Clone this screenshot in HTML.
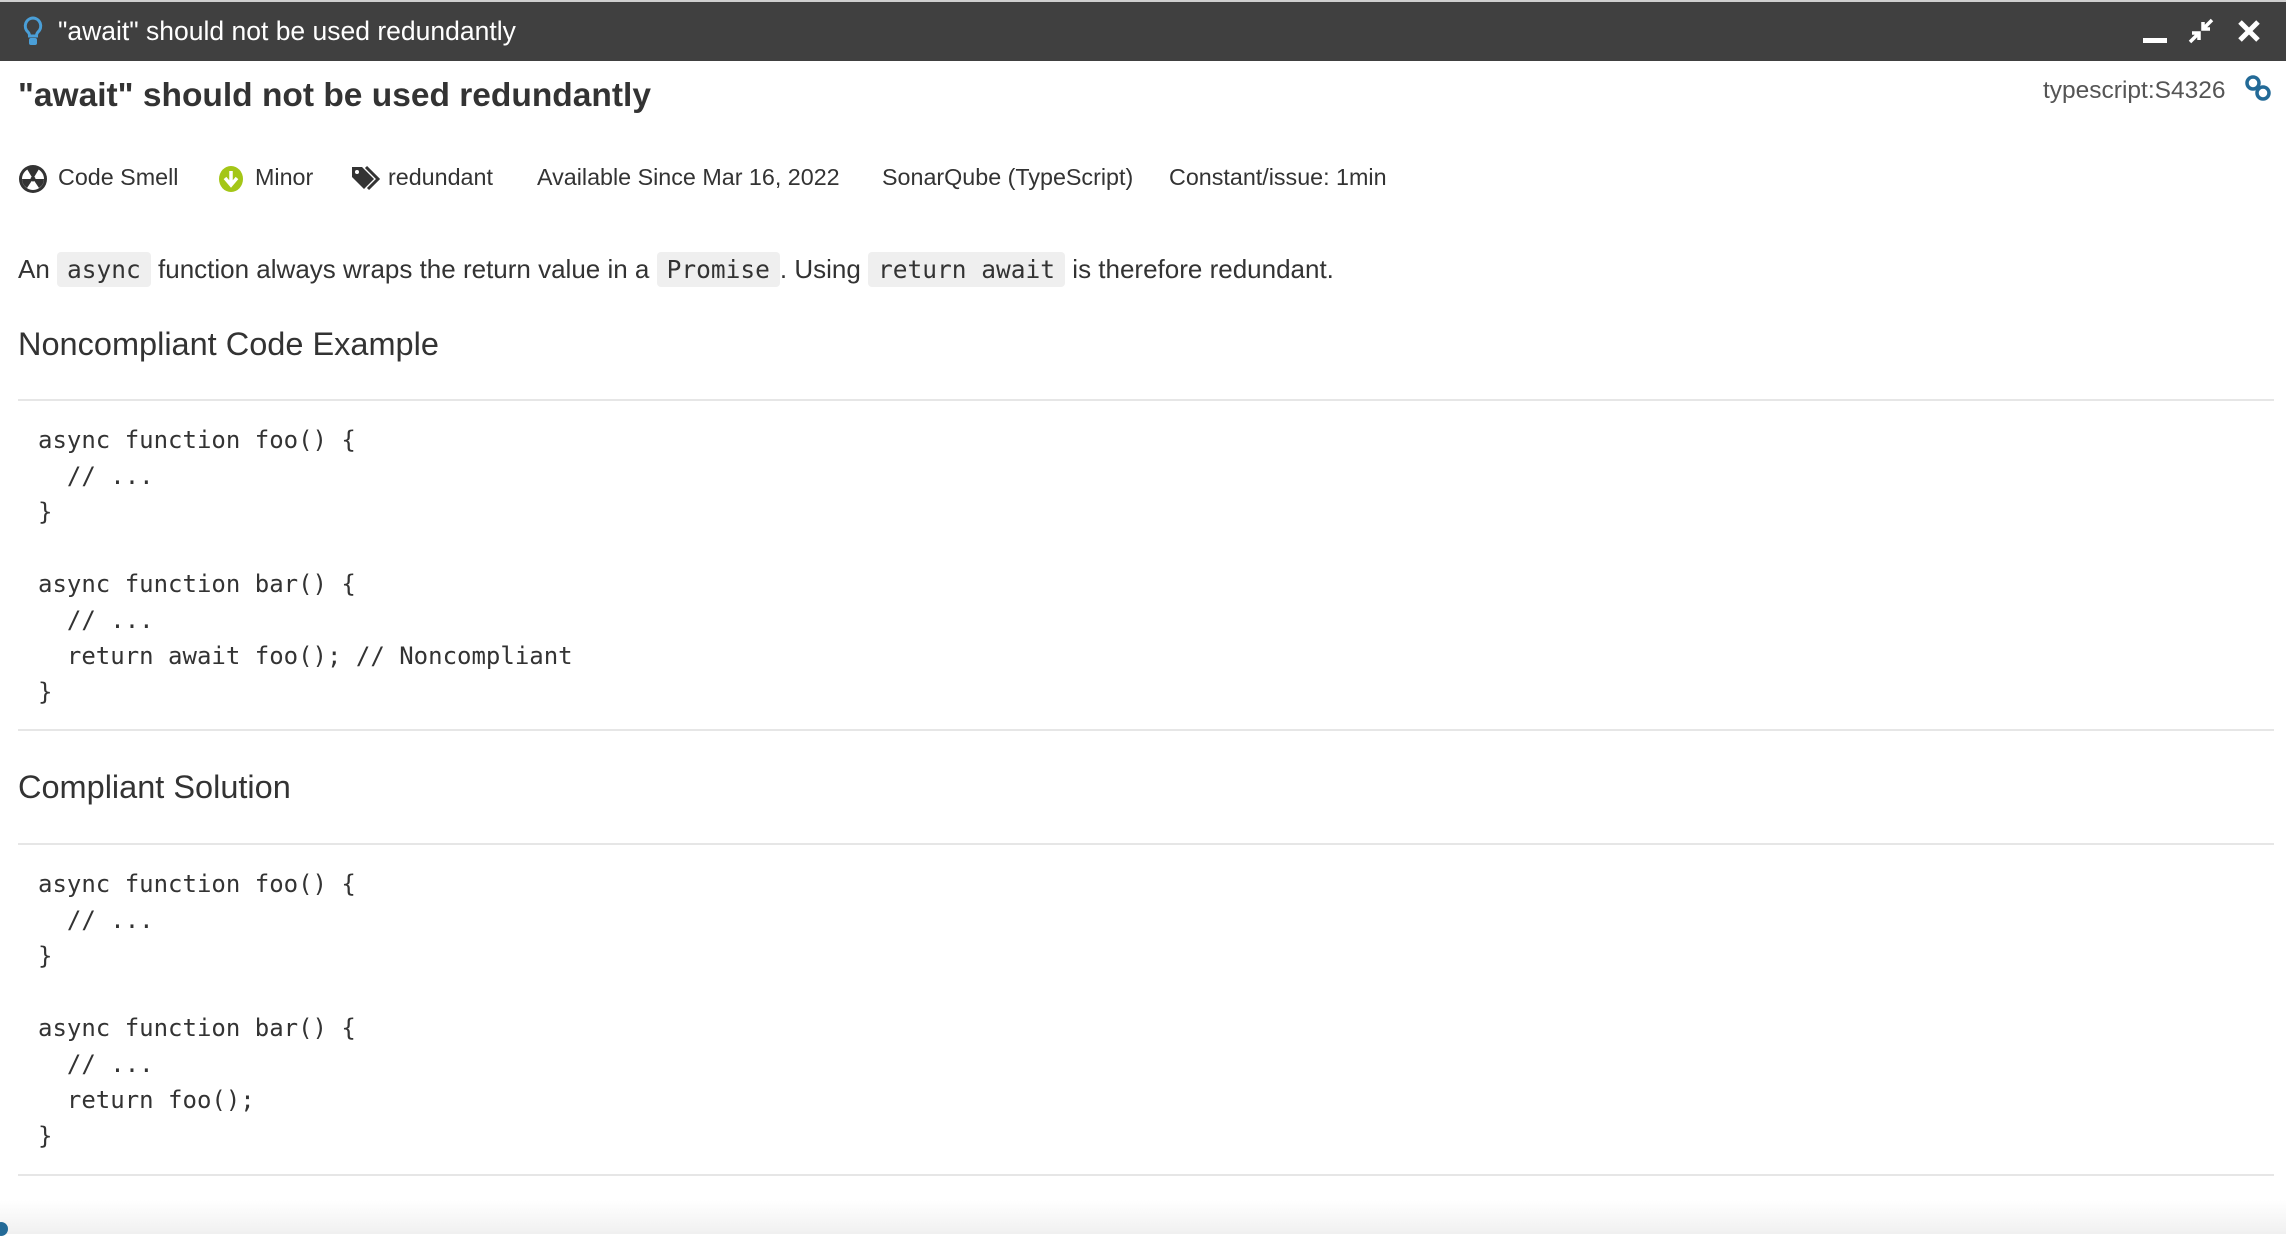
<!DOCTYPE html>
<html><head><meta charset="utf-8"><style>
*{margin:0;padding:0;box-sizing:border-box}
body{width:2286px;height:1234px;overflow:hidden;background:#fff;font-family:"Liberation Sans",Arial,sans-serif;color:#333;position:relative}
.a{position:absolute;white-space:nowrap}
.bar{position:absolute;left:0;top:2px;width:2286px;height:59px;background:#404040}
.top{position:absolute;left:0;top:0;width:2286px;height:2px;background:#cfcfcf}
.hr{position:absolute;left:18px;width:2256px;height:2px;background:#e6e6e6}
pre{position:absolute;left:38px;font-family:"DejaVu Sans Mono","Liberation Mono",monospace;font-size:24px;line-height:36px;color:#333}
code{font-family:"DejaVu Sans Mono","Liberation Mono",monospace;background:#efefef;border-radius:4px;padding:3px 10px;font-size:24.5px}
.meta{font-size:23.3px;top:164px}
h2{position:absolute;left:18px;font-weight:normal;font-size:32.5px;color:#333}
</style></head><body>
<div class="top"></div>
<div class="bar"></div>
<svg class="a" style="left:22px;top:16px" width="22" height="32" viewBox="0 0 22 32"><path d="M11 2a8 8 0 0 0-5 14c1 1 1.5 2 1.5 4h7c0-2 .5-3 1.5-4a8 8 0 0 0-5-14z" fill="none" stroke="#4a9fd8" stroke-width="3"/><rect x="7" y="22" width="8" height="7" rx="2" fill="#4a9fd8"/></svg>
<div class="a" style="left:58px;top:16px;font-size:26.5px;color:#fff">"await" should not be used redundantly</div>
<svg class="a" style="left:2142px;top:24px" width="26" height="20"><rect x="1" y="14" width="24" height="5" fill="#fff"/></svg>
<svg class="a" style="left:2188px;top:18px" width="26" height="26" viewBox="0 0 26 26"><path d="M24 2 15 11M15 4v7h7M2 24l9-9M4 15h7v7" stroke="#fff" stroke-width="3.5" fill="none"/></svg>
<svg class="a" style="left:2236px;top:18px" width="26" height="26" viewBox="0 0 26 26"><path d="M4 4l18 18M22 4 4 22" stroke="#fff" stroke-width="5"/></svg>

<div class="a" style="left:18px;top:77px;font-size:33.5px;font-weight:bold;color:#333">"await" should not be used redundantly</div>
<div class="a" style="left:2043px;top:77px;font-size:24.5px;color:#555">typescript:S4326</div>
<svg class="a" style="left:2244px;top:74px" width="28" height="28" viewBox="0 0 28 28"><circle cx="9" cy="9" r="6" fill="none" stroke="#236a97" stroke-width="3.5"/><circle cx="19" cy="19" r="6" fill="none" stroke="#236a97" stroke-width="3.5"/></svg>

<svg class="a" style="left:18px;top:164px" width="30" height="30" viewBox="0 0 30 30"><circle cx="15" cy="15" r="14" fill="#333"/><circle cx="15" cy="15" r="11" fill="#fff"/><path d="M15 15 9 5A11 11 0 0 1 21 5zM15 15h11a11 11 0 0 1-5 9zM15 15 9 24A11 11 0 0 1 4 15z" fill="#333"/><circle cx="15" cy="15" r="2.5" fill="#333"/></svg>
<div class="a meta" style="left:58px">Code Smell</div>
<svg class="a" style="left:218px;top:165px" width="26" height="28" viewBox="0 0 26 28"><ellipse cx="13" cy="14" rx="12" ry="13" fill="#a4c617"/><path d="M13 6v13M7 13l6 7 6-7" stroke="#fff" stroke-width="3.5" fill="none"/></svg>
<div class="a meta" style="left:255px">Minor</div>
<svg class="a" style="left:350px;top:165px" width="30" height="28" viewBox="0 0 30 28"><path d="M2 2h10l12 12-10 10L2 12z" fill="#333"/><circle cx="7" cy="7" r="2" fill="#fff"/><path d="M16 2l12 12-10 10" stroke="#333" stroke-width="3" fill="none"/></svg>
<div class="a meta" style="left:388px">redundant</div>
<div class="a meta" style="left:537px">Available Since Mar 16, 2022</div>
<div class="a meta" style="left:882px">SonarQube (TypeScript)</div>
<div class="a meta" style="left:1169px">Constant/issue: 1min</div>

<div class="a" style="left:18px;top:254px;font-size:26px;color:#333">An <code>async</code> function always wraps the return value in a <code>Promise</code>. Using <code>return await</code> is therefore redundant.</div>

<h2 style="top:326px">Noncompliant Code Example</h2>
<div class="hr" style="top:399px"></div>
<pre style="top:422px">async function foo() {
  // ...
}

async function bar() {
  // ...
  return await foo(); // Noncompliant
}</pre>
<div class="hr" style="top:729px"></div>
<h2 style="top:769px">Compliant Solution</h2>
<div class="hr" style="top:843px"></div>
<pre style="top:866px">async function foo() {
  // ...
}

async function bar() {
  // ...
  return foo();
}</pre>
<div class="hr" style="top:1174px"></div>
<div class="a" style="left:0;top:1200px;width:2286px;height:34px;background:linear-gradient(#fff,#f0f0f0)"></div>
<div class="a" style="left:-6px;top:1222px;width:14px;height:14px;border-radius:50%;background:#236a97"></div>
</body></html>
